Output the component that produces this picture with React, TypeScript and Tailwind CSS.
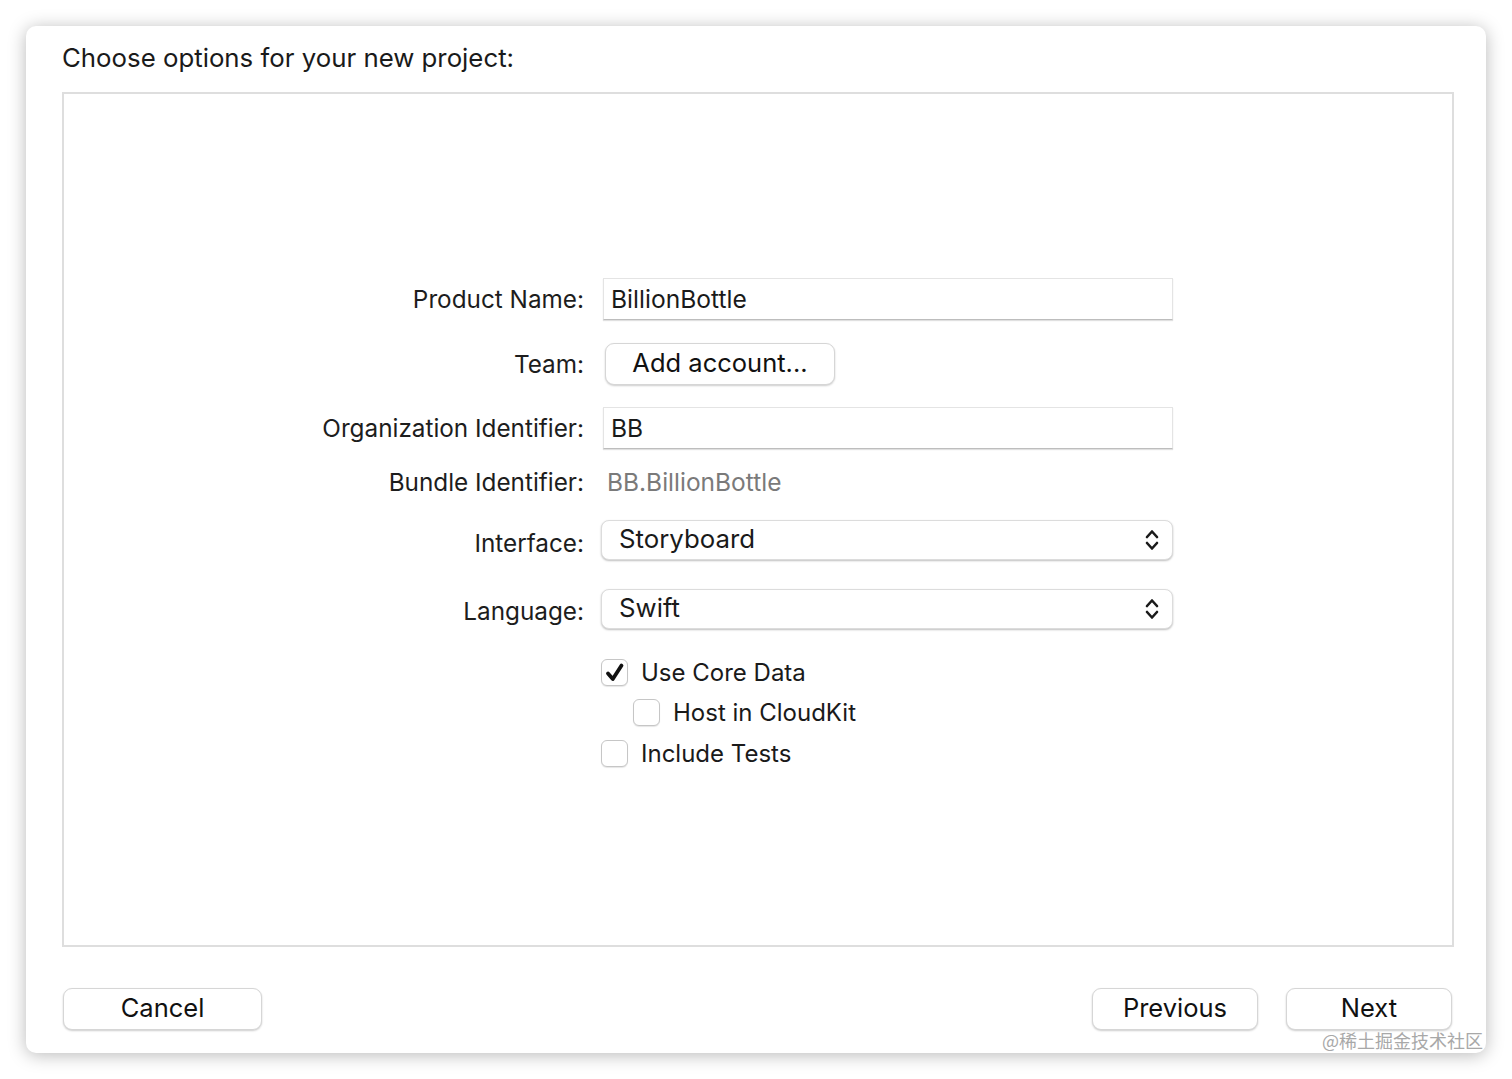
import React from "react";

const font = { fontFamily: "Inter, 'Noto Sans', 'Liberation Sans', sans-serif" };

function Label({ children, className = "" }: { children: React.ReactNode; className?: string }) {
  return (
    <div className={`w-[539px] shrink-0 pr-[19px] text-right text-[24.3px] text-[#1d1d1d] ${className}`}>{children}</div>
  );
}

function Chevrons() {
  return (
    <svg width="14" height="24" viewBox="0 0 14 24" fill="none" stroke="#1a1a1a" strokeWidth="2.6" strokeLinecap="round" strokeLinejoin="round">
      <path d="M2 9 L7 3.5 L12 9" />
      <path d="M2 15 L7 20.5 L12 15" />
    </svg>
  );
}

function Popup({ value }: { value: string }) {
  return (
    <div className="ml-[-2px] flex h-[40px] w-[572px] items-center justify-between rounded-[8px] border border-[#dcdcdc] bg-white pl-[17px] pr-[13px] text-[25.8px] text-[#1a1a1a] shadow-[0_1px_2px_rgba(0,0,0,0.25)]">
      <span className="-mt-[2px]">{value}</span>
      <Chevrons />
    </div>
  );
}

function Field({ value }: { value: string }) {
  return (
    <div className="flex h-[42px] w-[570px] items-center border border-[#e4e4e4] border-b-[#bdbdbd] bg-white pl-[7px] text-[24.6px] text-[#1a1a1a] shadow-[0_1px_1px_rgba(0,0,0,0.12)]">
      {value}
    </div>
  );
}

function Checkbox({ checked }: { checked?: boolean }) {
  return (
    <div className="flex h-[27px] w-[27px] shrink-0 items-center justify-center rounded-[6px] border border-[#c6c6c6] bg-white shadow-[0_1px_1px_rgba(0,0,0,0.1)]">
      {checked && (
        <svg width="22" height="22" viewBox="0 0 22 22" fill="none" stroke="#111" strokeWidth="3.8" strokeLinecap="round" strokeLinejoin="round">
          <path d="M4 11.5 L8.8 17 L17.5 3.5" />
        </svg>
      )}
    </div>
  );
}

function Button({ children, className = "" }: { children: React.ReactNode; className?: string }) {
  return (
    <div className={`flex h-[42px] items-center justify-center rounded-[9px] border border-[#d6d6d6] bg-white text-[25.5px] text-[#111] shadow-[0_1px_2px_rgba(0,0,0,0.2)] ${className}`}>
      <span className="-mt-[1px]">{children}</span>
    </div>
  );
}

export default function App() {
  return (
    <div className="h-[1079px] w-[1512px] bg-white pl-[26px] pt-[26px]" style={font}>
      <div className="relative flex h-[1027px] w-[1460px] flex-col rounded-[10px] bg-white px-[36px] shadow-[0_2px_18px_rgba(0,0,0,0.28)]">
        <div className="mt-[15px] h-[34px] text-[25.8px] leading-[34px] text-[#1a1a1a]">Choose options for your new project:</div>
        <div className="mt-[17px] h-[855px] w-[1392px] border-2 border-[#dedede] pt-[184px]">
          <div className="flex h-[42px] items-center">
            <Label>Product Name:</Label>
            <Field value="BillionBottle" />
          </div>
          <div className="mt-[23px] flex h-[41px] items-center">
            <Label className="mt-[2px]">Team:</Label>
            <Button className="ml-[2px] w-[230px]">Add account...</Button>
          </div>
          <div className="mt-[23px] flex h-[42px] items-center">
            <Label>Organization Identifier:</Label>
            <Field value="BB" />
          </div>
          <div className="mt-[18px] flex h-[30px] items-center">
            <Label>Bundle Identifier:</Label>
            <div className="pl-[4px] text-[24.5px] text-[#7a7a7a]">BB.BillionBottle</div>
          </div>
          <div className="mt-[23px] flex h-[40px] items-center">
            <Label className="mt-[6px]">Interface:</Label>
            <Popup value="Storyboard" />
          </div>
          <div className="mt-[29px] flex h-[40px] items-center">
            <Label className="mt-[4px]">Language:</Label>
            <Popup value="Swift" />
          </div>
          <div className="mt-[30px] flex h-[27px] items-center pl-[537px]">
            <Checkbox checked />
            <span className="ml-[13px] text-[24px] text-[#1a1a1a]">Use Core Data</span>
          </div>
          <div className="mt-[13px] flex h-[27px] items-center pl-[569px]">
            <Checkbox />
            <span className="ml-[13px] text-[24px] text-[#1a1a1a]">Host in CloudKit</span>
          </div>
          <div className="mt-[14px] flex h-[27px] items-center pl-[537px]">
            <Checkbox />
            <span className="ml-[13px] text-[24px] text-[#1a1a1a]">Include Tests</span>
          </div>
        </div>
        <div className="mt-[41px] flex items-start">
          <Button className="ml-[1px] w-[199px]">Cancel</Button>
          <div className="flex-1" />
          <Button className="w-[166px]">Previous</Button>
          <Button className="ml-[28px] mr-[-2px] w-[166px]">Next</Button>
        </div>
        <div className="absolute bottom-[2px] right-[3px] text-[18px] leading-[22px] text-[#a8a8a8]" style={{ fontFamily: "'Noto Sans CJK SC', 'Noto Sans', sans-serif" }}>
          @稀土掘金技术社区
        </div>
      </div>
    </div>
  );
}
